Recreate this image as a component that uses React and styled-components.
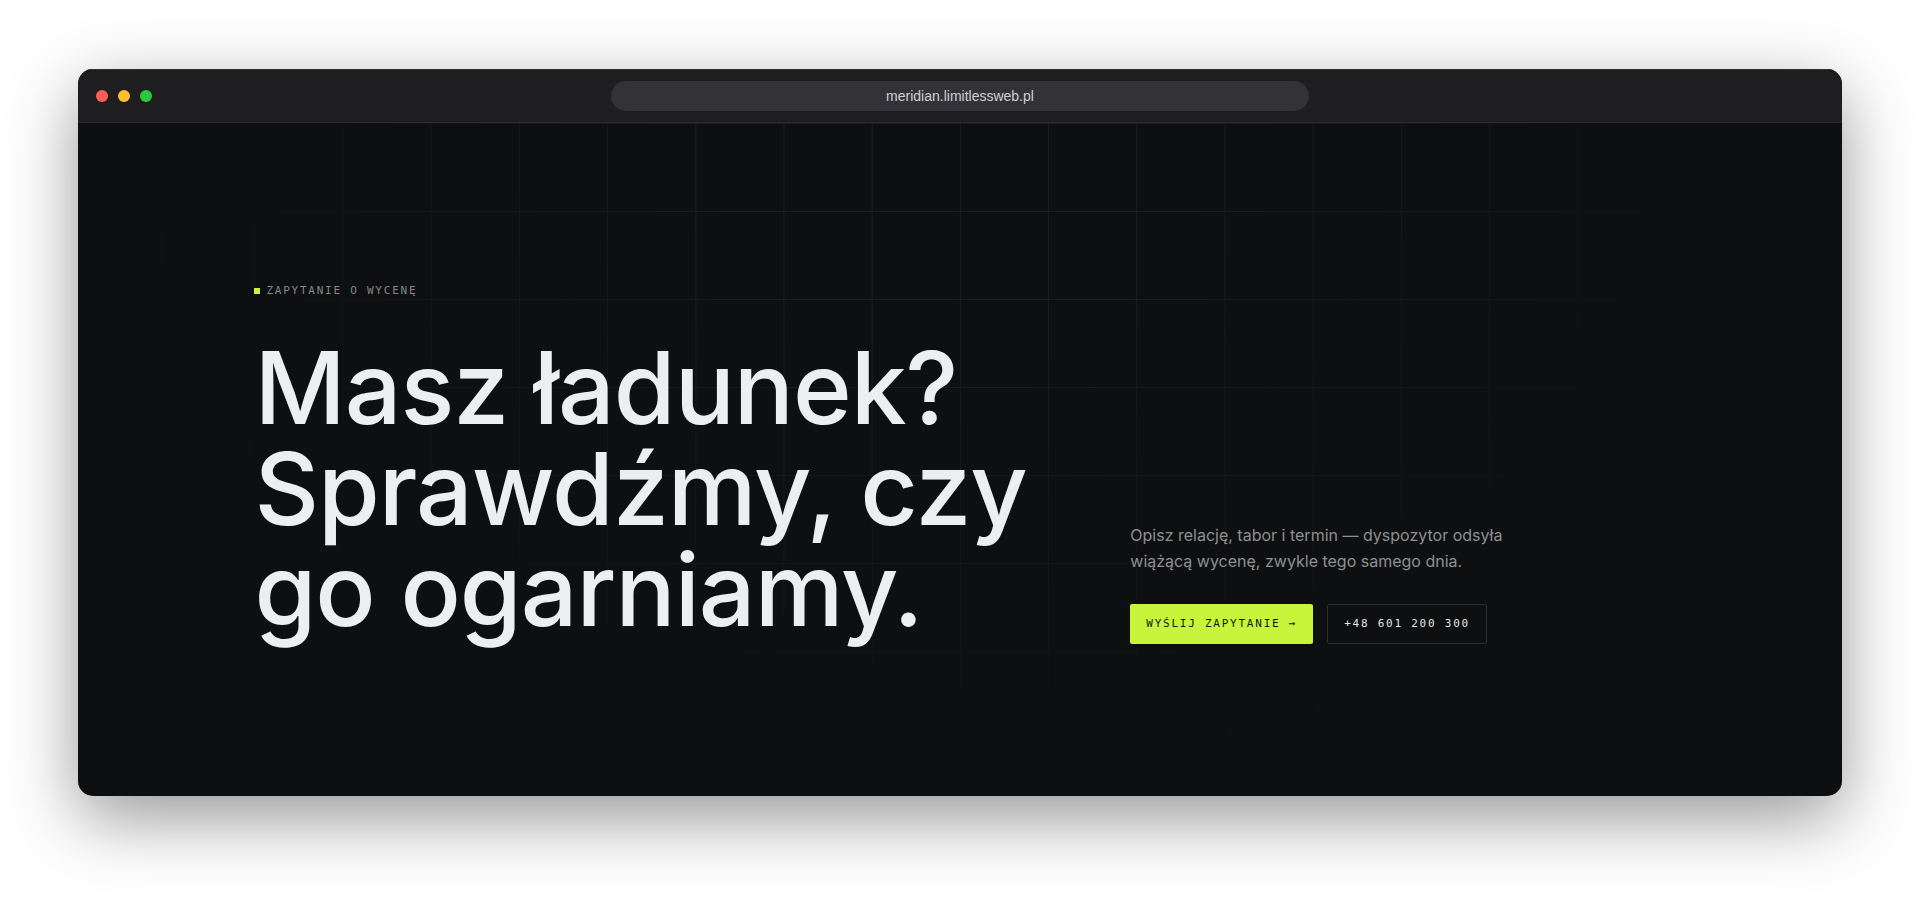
import styled, { createGlobalStyle } from "styled-components"

export default function App() {
    return (
        <>
            <GlobalStyle />
            <BrowserWindow>
                <TitleBar>
                    <WindowControls>
                        <ControlDot color={"#FF5F57"} aria-label="Zamknij" />
                        <ControlDot color={"#FEBC2E"} aria-label="Minimalizuj" />
                        <ControlDot color={"#28C840"} aria-label="Maksymalizuj" />
                    </WindowControls>
                    <AddressInput type="text" aria-label="Adres strony" defaultValue="meridian.limitlessweb.pl" />
                </TitleBar>

                <QuoteSection>
                    <Eyebrow>Zapytanie o wycenę</Eyebrow>
                    <QuoteRow>
                        <Title>
                            Masz ładunek?<br />
                            Sprawdźmy, czy<br />
                            go ogarniamy.
                        </Title>
                        <ContactStyle>
                            <p>Opisz relację, tabor i termin — dyspozytor odsyła wiążącą wycenę, zwykle tego samego dnia.</p>
                            <ButtonsStyle>
                                <PrimaryLink href="#zapytanie">Wyślij zapytanie →</PrimaryLink>
                                <PhoneLink href="tel:+48601200300">+48 601 200 300</PhoneLink>
                            </ButtonsStyle>
                        </ContactStyle>
                    </QuoteRow>
                </QuoteSection>
            </BrowserWindow>
        </>
    )
}

const GlobalStyle = createGlobalStyle`
    * {
        box-sizing: border-box;
    }
    body {
        margin: 0;
        background-color: #FFFFFF;
        font-family: Inter, sans-serif;
        -webkit-font-smoothing: antialiased;
    }
    #root {
        display: flow-root;
    }
`

const BrowserWindow = styled.div`
    margin: 69px 78px 100px;
    border-radius: 15px;
    overflow: hidden;
    background-color: #0D0F10;
    box-shadow: 0 22px 70px rgba(0, 0, 0, 0.41);
`

const TitleBar = styled.header`
    display: grid;
    grid-template-columns: 1fr minmax(0, 698px) 1fr;
    align-items: center;
    height: 54px;
    padding: 0 18px;
    background-color: #1E1E20;
    border-top: 1px solid #303133;
    border-bottom: 1px solid #2B2C2E;
`

const WindowControls = styled.div`
    display: flex;
    gap: 10px;
`

const ControlDot = styled.button`
    width: 12px;
    height: 12px;
    padding: 0;
    border: none;
    border-radius: 50%;
    background-color: ${props => props.color};
    cursor: pointer;
`

const AddressInput = styled.input`
    width: 100%;
    height: 30px;
    padding: 0 16px;
    border: none;
    border-radius: 15px;
    background-color: #333337;
    color: #CFCFD3;
    font-family: "Liberation Sans", Arial, sans-serif;
    font-size: 14px;
    text-align: center;
`

const QuoteSection = styled.section`
    position: relative;
    padding: 159px 10% 152px;

    &::before {
        content: "";
        position: absolute;
        inset: 0;
        background-image:
            linear-gradient(to right, #1B1D1F 1px, transparent 1px),
            linear-gradient(to bottom, #1B1D1F 1px, transparent 1px);
        background-size: 5% 88px;
        mask-image: radial-gradient(ellipse 46% 92% at 50% 5%, #000 30%, transparent 100%);
    }
    & > * {
        position: relative;
    }
`

const Eyebrow = styled.p`
    display: flex;
    align-items: center;
    gap: 6px;
    margin: 0 0 37px;
    color: #85878A;
    font-family: "DejaVu Sans Mono", monospace;
    font-size: 11px;
    line-height: 18px;
    letter-spacing: 0.16em;
    text-transform: uppercase;

    &::before {
        content: "";
        width: 6px;
        height: 6px;
        background-color: #C8F43C;
    }
`

const QuoteRow = styled.div`
    display: grid;
    grid-template-columns: 13fr 8fr;
    align-items: end;
    column-gap: 6px;
`

const Title = styled.h1`
    margin: 0;
    padding-bottom: 4px;
    color: #EDEEF0;
    font-size: 100px;
    font-weight: 500;
    line-height: 101px;
    letter-spacing: -0.01em;
    white-space: nowrap;
`

const ContactStyle = styled.div`
    p {
        max-width: 400px;
        margin: 0 0 30px;
        color: #8E9092;
        font-size: 16px;
        line-height: 26px;
    }
`

const ButtonsStyle = styled.div`
    display: flex;
    flex-wrap: wrap;
    gap: 14px;
`

const ActionLink = styled.a`
    padding: 0 16px;
    border-radius: 2px;
    font-family: "DejaVu Sans Mono", monospace;
    font-size: 11px;
    line-height: 40px;
    letter-spacing: 0.16em;
    text-decoration: none;
    text-transform: uppercase;
`

const PrimaryLink = styled(ActionLink)`
    background-color: #C8F43C;
    color: #14180A;
`

const PhoneLink = styled(ActionLink)`
    border: 1px solid #2B2D2F;
    line-height: 38px;
    color: #E4E5E7;
`
